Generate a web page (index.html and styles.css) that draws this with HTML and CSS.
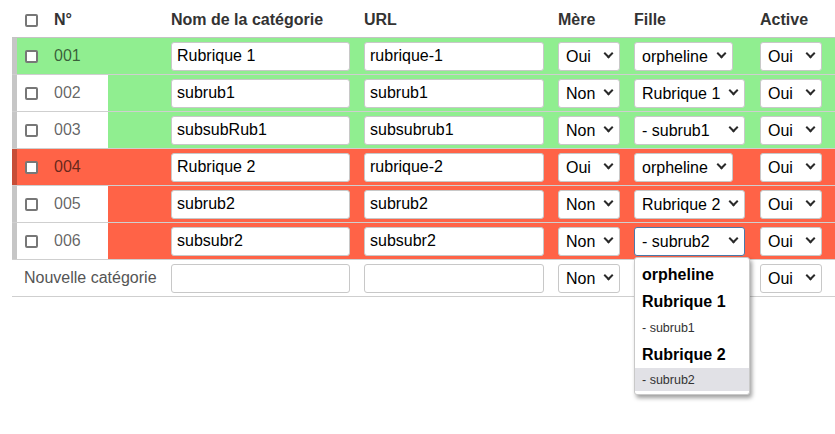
FILE: index.html
```html
<!DOCTYPE html>
<html lang="fr">
<head>
<meta charset="utf-8">
<title>Catégories</title>
<link rel="stylesheet" href="styles.css">
</head>
<body>
<div class="wrap">
<table class="cats">
  <colgroup>
    <col class="c-handle"><col class="c-chk"><col class="c-num"><col class="c-sp">
    <col class="c-nom"><col class="c-url"><col class="c-mere"><col class="c-fille"><col class="c-act">
  </colgroup>
  <thead>
    <tr class="head">
      <th></th>
      <th class="chk"><input type="checkbox"></th>
      <th class="num">N°</th>
      <th></th>
      <th class="f">Nom de la catégorie</th>
      <th class="f">URL</th>
      <th class="f">Mère</th>
      <th class="f">Fille</th>
      <th class="f act">Active</th>
    </tr>
  </thead>
  <tbody>
    <tr class="green parent">
      <td class="handle"></td>
      <td class="chk"><input type="checkbox"></td>
      <td class="num">001</td>
      <td class="sp"></td>
      <td class="f"><input class="t-nom" type="text" value="Rubrique 1"></td>
      <td class="f"><input class="t-url" type="text" value="rubrique-1"></td>
      <td class="f"><span class="sel"><select class="s-sm"><option>Oui</option><option>Non</option></select></span></td>
      <td class="f"><span class="sel"><select class="s-p"><option>orpheline</option></select></span></td>
      <td class="f act"><span class="sel"><select class="s-sm"><option>Oui</option><option>Non</option></select></span></td>
    </tr>
    <tr class="green child">
      <td class="handle"></td>
      <td class="chk"><input type="checkbox"></td>
      <td class="num">002</td>
      <td class="sp"></td>
      <td class="f"><input class="t-nom" type="text" value="subrub1"></td>
      <td class="f"><input class="t-url" type="text" value="subrub1"></td>
      <td class="f"><span class="sel"><select class="s-sm"><option>Non</option><option>Oui</option></select></span></td>
      <td class="f"><span class="sel"><select class="s-c"><option>Rubrique 1</option></select></span></td>
      <td class="f act"><span class="sel"><select class="s-sm"><option>Oui</option><option>Non</option></select></span></td>
    </tr>
    <tr class="green child">
      <td class="handle"></td>
      <td class="chk"><input type="checkbox"></td>
      <td class="num">003</td>
      <td class="sp"></td>
      <td class="f"><input class="t-nom" type="text" value="subsubRub1"></td>
      <td class="f"><input class="t-url" type="text" value="subsubrub1"></td>
      <td class="f"><span class="sel"><select class="s-sm"><option>Non</option><option>Oui</option></select></span></td>
      <td class="f"><span class="sel"><select class="s-c"><option>- subrub1</option></select></span></td>
      <td class="f act"><span class="sel"><select class="s-sm"><option>Oui</option><option>Non</option></select></span></td>
    </tr>
    <tr class="red parent drag">
      <td class="handle"></td>
      <td class="chk"><input type="checkbox"></td>
      <td class="num">004</td>
      <td class="sp"></td>
      <td class="f"><input class="t-nom" type="text" value="Rubrique 2"></td>
      <td class="f"><input class="t-url" type="text" value="rubrique-2"></td>
      <td class="f"><span class="sel"><select class="s-sm"><option>Oui</option><option>Non</option></select></span></td>
      <td class="f"><span class="sel"><select class="s-p"><option>orpheline</option></select></span></td>
      <td class="f act"><span class="sel"><select class="s-sm"><option>Oui</option><option>Non</option></select></span></td>
    </tr>
    <tr class="red child">
      <td class="handle"></td>
      <td class="chk"><input type="checkbox"></td>
      <td class="num">005</td>
      <td class="sp"></td>
      <td class="f"><input class="t-nom" type="text" value="subrub2"></td>
      <td class="f"><input class="t-url" type="text" value="subrub2"></td>
      <td class="f"><span class="sel"><select class="s-sm"><option>Non</option><option>Oui</option></select></span></td>
      <td class="f"><span class="sel"><select class="s-c"><option>Rubrique 2</option></select></span></td>
      <td class="f act"><span class="sel"><select class="s-sm"><option>Oui</option><option>Non</option></select></span></td>
    </tr>
    <tr class="red child">
      <td class="handle"></td>
      <td class="chk"><input type="checkbox"></td>
      <td class="num">006</td>
      <td class="sp"></td>
      <td class="f"><input class="t-nom" type="text" value="subsubr2"></td>
      <td class="f"><input class="t-url" type="text" value="subsubr2"></td>
      <td class="f"><span class="sel"><select class="s-sm"><option>Non</option><option>Oui</option></select></span></td>
      <td class="f"><span class="sel"><select class="s-c focus"><option>- subrub2</option></select></span></td>
      <td class="f act"><span class="sel"><select class="s-sm"><option>Oui</option><option>Non</option></select></span></td>
    </tr>
    <tr class="new">
      <td class="newlabel" colspan="4">Nouvelle catégorie</td>
      <td class="f"><input class="t-nom" type="text" value=""></td>
      <td class="f"><input class="t-url" type="text" value=""></td>
      <td class="f"><span class="sel"><select class="s-sm"><option>Non</option><option>Oui</option></select></span></td>
      <td class="f"></td>
      <td class="f act"><span class="sel"><select class="s-sm"><option>Oui</option><option>Non</option></select></span></td>
    </tr>
  </tbody>
</table>
<div class="dropdown">
  <div class="opt bold">orpheline</div>
  <div class="opt bold big">Rubrique 1</div>
  <div class="opt small">- subrub1</div>
  <div class="opt bold big">Rubrique 2</div>
  <div class="opt small hl">- subrub2</div>
</div>
</div>
</body>
</html>
```
FILE: styles.css
```css
html, body {
  margin: 0;
  padding: 0;
  background: #fff;
}
html {
  height: 100%;
}
body {
  min-height: 100%;
  font-family: "Liberation Sans", Arial, sans-serif;
  font-size: 16px;
  color: #000;
}
.wrap {
  position: relative;
  padding-left: 12px;
  min-height: 434px;
}
.cats {
  width: 823px;
  table-layout: fixed;
  border-collapse: collapse;
  border-spacing: 0;
}
.c-handle { width: 5px; }
.c-chk { width: 29px; }
.c-num { width: 62px; }
.c-sp { width: 56px; }
.c-nom { width: 193px; }
.c-url { width: 194px; }
.c-mere { width: 76px; }
.c-fille { width: 125px; }
.c-act { width: 83px; }

.cats th, .cats td {
  padding: 0;
  text-align: left;
  vertical-align: middle;
  white-space: nowrap;
}
.head th {
  height: 34px;
  padding-top: 3px;
  font-weight: bold;
  color: #333;
  border-bottom: 1px solid #c4c4c4;
}
.cats tbody td {
  height: 36px;
  border-bottom: 1px solid #cfcfcf;
}
.chk {
  padding-left: 8px !important;
}
.chk input {
  -webkit-appearance: none;
  appearance: none;
  box-sizing: border-box;
  margin: 0;
  width: 13px;
  height: 13px;
  display: block;
  border: 2px solid #777;
  border-radius: 2px;
  background: #fff;
}
.num {
  padding-left: 8px !important;
}
td.num {
  color: rgba(0, 0, 0, 0.62);
}
.f {
  padding-left: 7px !important;
}
.f.act {
  padding-left: 8px !important;
}
.newlabel {
  padding-left: 12px !important;
  color: #555;
}

/* row colours */
.handle {
  background-color: #fff;
  background-image: repeating-conic-gradient(rgba(0, 0, 0, 0.45) 0 25%, transparent 0 50%);
  background-size: 2px 2px;
}
.green td { background-color: #90ee90; }
.red td { background-color: #ff6347; }
.child td.handle, .child td.chk, .child td.num,
.green.parent td.handle {
  background-color: #fff;
}
.red.drag td.handle {
  background-color: #ff6347;
}

/* fields */
input[type="text"] {
  box-sizing: border-box;
  height: 29px;
  margin: 0;
  padding: 0 5px;
  border: 1px solid #c8c8c8;
  border-radius: 3px;
  background: #fff;
  font: 16px "Liberation Sans", Arial, sans-serif;
  color: #000;
  display: block;
}
.t-nom { width: 179px; }
.t-url { width: 180px; }

.sel {
  position: relative;
  display: inline-block;
  vertical-align: middle;
}
.sel::after {
  content: "";
  position: absolute;
  right: 8px;
  top: 8px;
  width: 5px;
  height: 5px;
  border-right: 2px solid #2a2a2a;
  border-bottom: 2px solid #2a2a2a;
  transform: rotate(45deg);
  pointer-events: none;
}
.sel select {
  -webkit-appearance: none;
  appearance: none;
  box-sizing: border-box;
  height: 29px;
  margin: 0;
  padding: 0 0 0 7px;
  border: 1px solid #c8c8c8;
  border-radius: 3px;
  background: #fff;
  font: 16px "Liberation Sans", Arial, sans-serif;
  color: #000;
  display: block;
}
.s-sm { width: 62px; }
.s-p { width: 99px; }
.s-c { width: 111px; }
.sel select.focus {
  border-color: #4a78a8;
}

/* open dropdown of row 006 "Fille" select */
.dropdown {
  position: absolute;
  left: 634px;
  top: 257px;
  width: 116px;
  box-sizing: border-box;
  padding: 4px 0 3px;
  background: #fff;
  border: 1px solid #c9c9c9;
  border-radius: 3px;
  box-shadow: 2px 3px 4px rgba(0, 0, 0, 0.38);
  z-index: 5;
}
.opt {
  padding-left: 7px;
  display: flex;
  align-items: center;
  white-space: nowrap;
}
.opt.bold {
  font-weight: bold;
  font-size: 16px;
  color: #000;
  height: 26px;
}
.opt.big {
  height: 27px;
}
.opt.small {
  font-size: 12.5px;
  color: #333;
  height: 26px;
}
.opt.hl {
  background: #e1e1e6;
  height: 23px;
}
```
